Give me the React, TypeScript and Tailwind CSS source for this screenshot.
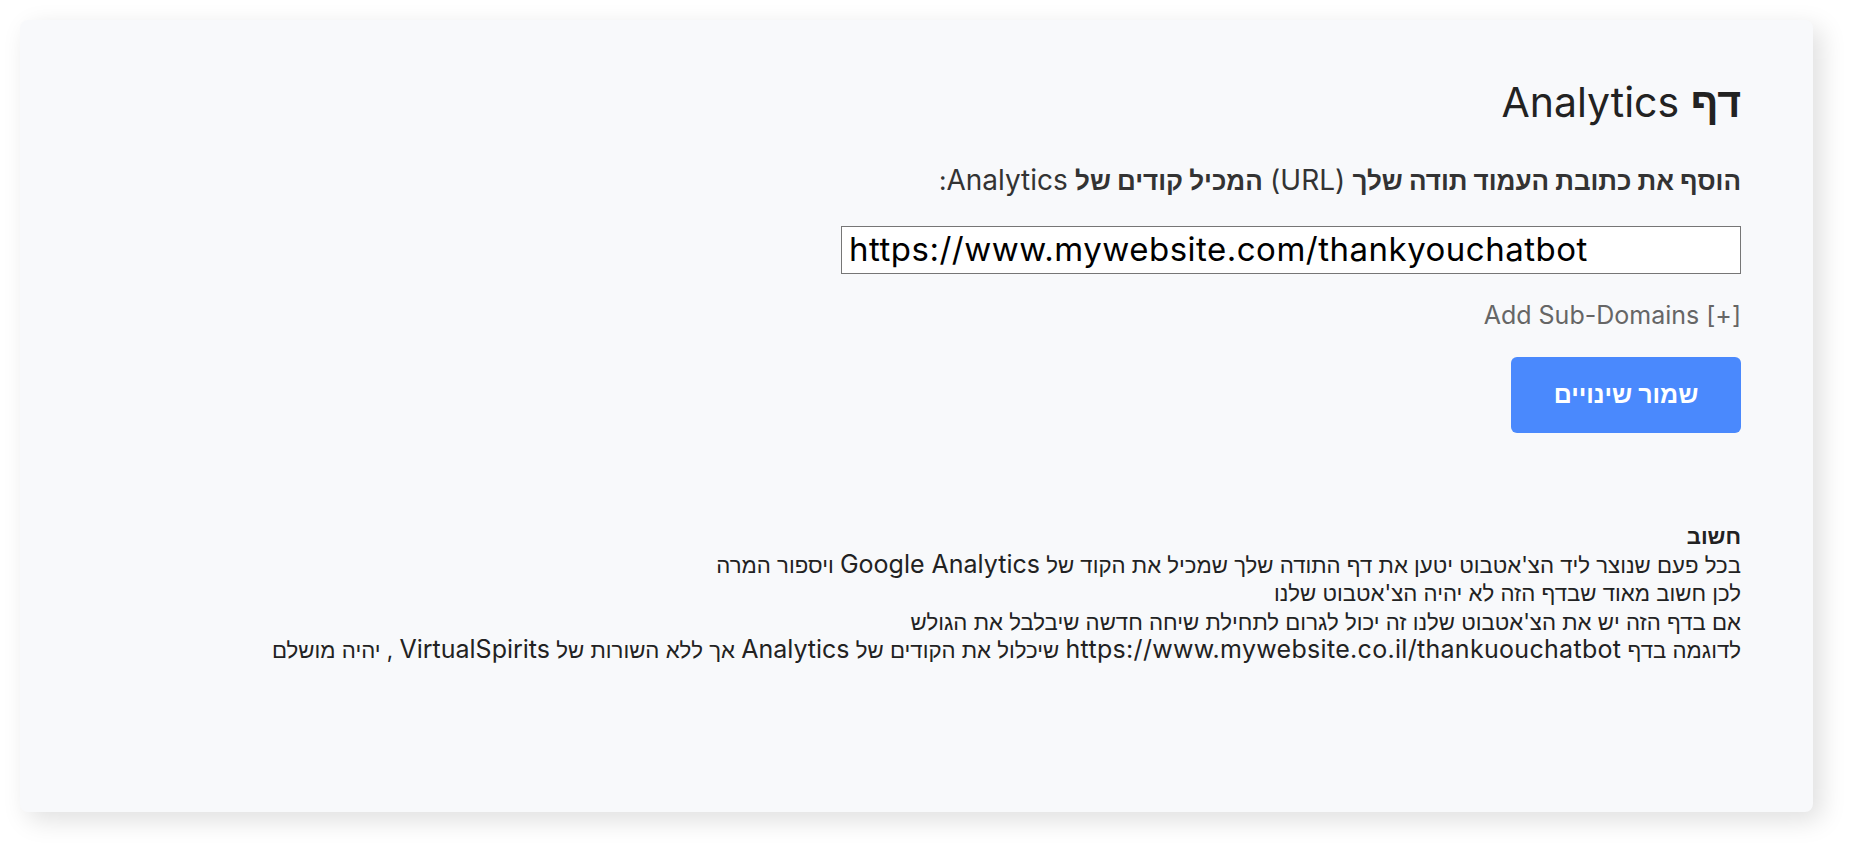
import React from "react";

const font = { fontFamily: 'Inter, "Liberation Sans", sans-serif' };

function L({ children, size }: { children: React.ReactNode; size: string }) {
  return (
    <span className={size} style={font}>
      {children}
    </span>
  );
}

export default function App() {
  return (
    <div className="min-h-[851px] w-[1853px] bg-white pt-[20px] pl-[20px]" style={font}>
      <div
        dir="rtl"
        className="h-[792px] w-[1793px] rounded-lg bg-[#f8f9fb] pr-[72px] pt-[57px] text-[#222] shadow-[8px_8px_26px_rgba(0,0,0,0.13)]"
      >
        <h1 className="text-[41px] leading-[50px] font-normal text-[#222]">
          <span className="font-bold">דף</span> Analytics
        </h1>
        <p className="mt-[38px] text-[26px] leading-[32px] text-[#333]">
          <span className="font-bold">הוסף את כתובת העמוד תודה שלך</span>{" "}
          <L size="text-[28px] leading-[20px]">(URL)</L>{" "}
          <span className="font-bold">המכיל קודים של</span>{" "}
          <L size="text-[28px] leading-[20px]">Analytics</L>:
        </p>
        <div className="mt-[29px] flex">
          <input
            dir="ltr"
            readOnly
            value="https://www.mywebsite.com/thankyouchatbot"
            className="h-[48px] w-[900px] border border-[#767676] bg-white px-[7px] text-left text-[33px] tracking-[0.5px] text-black outline-none"
            style={font}
          />
        </div>
        <div className="mt-[26px] text-[25px] leading-[30px] text-[#666]">
          <span dir="ltr">Add Sub-Domains [+]</span>
        </div>
        <div className="mt-[27px] flex">
          <button className="flex h-[76px] w-[230px] items-center justify-center rounded-md bg-[#4a89fd] text-[25px] font-bold text-white">
            שמור שינויים
          </button>
        </div>
        <div className="mt-[89px] text-[22.2px] leading-[28.5px] text-[#222]">
          <div className="font-bold">חשוב</div>
          <div>
            בכל פעם שנוצר ליד הצ'אטבוט יטען את דף התודה שלך שמכיל את הקוד של{" "}
            <L size="text-[25px] leading-[20px]">Google Analytics</L> ויספור המרה
          </div>
          <div>לכן חשוב מאוד שבדף הזה לא יהיה הצ'אטבוט שלנו</div>
          <div>אם בדף הזה יש את הצ'אטבוט שלנו זה יכול לגרום לתחילת שיחה חדשה שיבלבל את הגולש</div>
          <div>
            לדוגמה בדף{" "}
            <L size="text-[25px] leading-[20px] tracking-[0.3px]">https://www.mywebsite.co.il/thankuouchatbot</L>{" "}
            שיכלול את הקודים של <L size="text-[25px] leading-[20px]">Analytics</L> אך ללא השורות של{" "}
            <L size="text-[25px] leading-[20px]">VirtualSpirits</L> , יהיה מושלם
          </div>
        </div>
      </div>
    </div>
  );
}
